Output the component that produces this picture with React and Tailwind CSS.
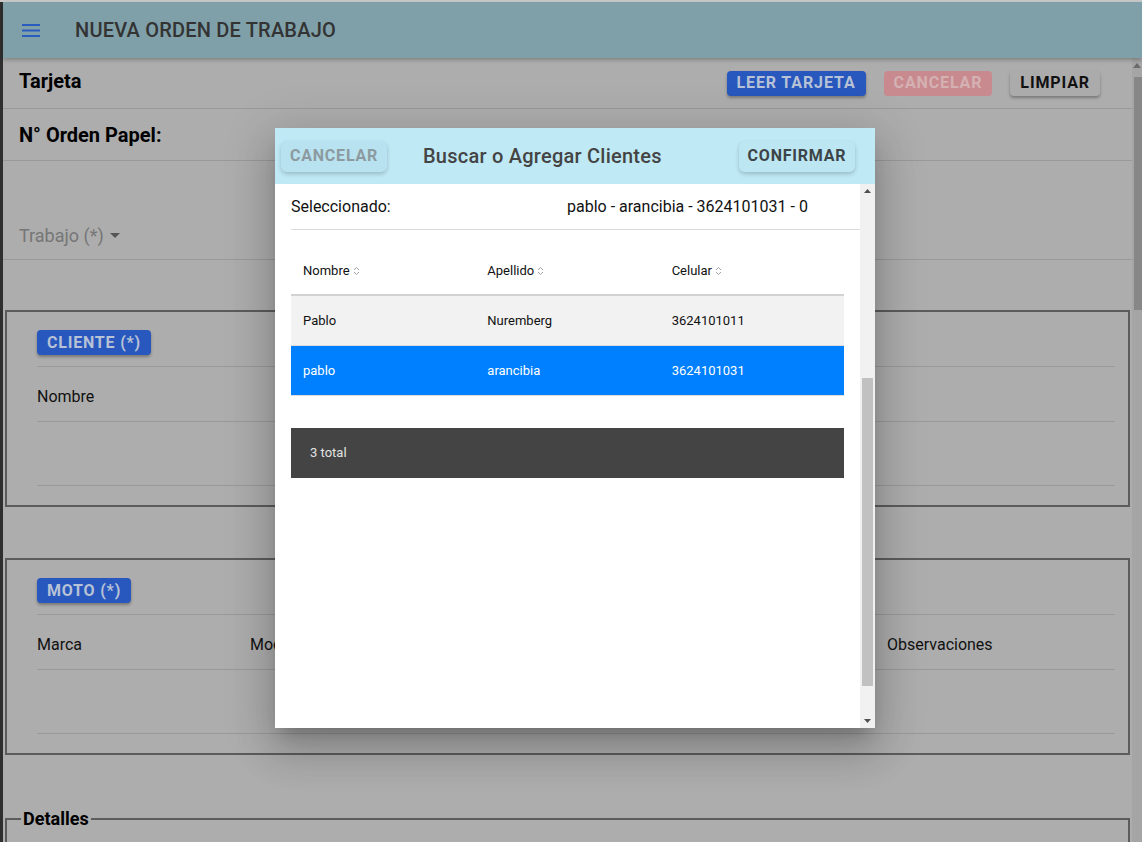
import React from 'react'

const CLIENTES = [
  { nombre: 'Pablo', apellido: 'Nuremberg', celular: '3624101011', sel: false },
  { nombre: 'pablo', apellido: 'arancibia', celular: '3624101031', sel: true },
]

function SortIcon() {
  return (
    <svg width="7" height="10" viewBox="0 0 7 10" className="ml-[3px] inline-block">
      <path d="M1 4 L3.5 1.5 L6 4" fill="none" stroke="#a0a0a0" strokeWidth="1" />
      <path d="M1 6 L3.5 8.5 L6 6" fill="none" stroke="#a0a0a0" strokeWidth="1" />
    </svg>
  )
}

function Chip({ children }) {
  return (
    <div className="h-[25px] px-[10px] rounded-[4px] bg-[#2857bd] text-[#b7c2d6] text-[16px] font-bold tracking-[0.05em] flex items-center shadow-[0_2px_3px_rgba(0,0,0,0.3)]">
      {children}
    </div>
  )
}

function FieldBox({ chip, labels }) {
  return (
    <div className="mx-[2px] border-2 border-[#5c5c5c] pl-[30px] pr-[13px] pt-[18px] pb-[19px]">
      <div className="flex">
        <Chip>{chip}</Chip>
      </div>
      <div className="mt-[11px] border-b border-[#999]" />
      <div className="h-[55px] pt-[6px] border-b border-[#999] grid grid-cols-[213px_213px_212px_212px_1fr] items-center text-[16px] text-[#111]">
        {labels.map((l, i) => (
          <span key={i}>{l}</span>
        ))}
      </div>
      <div className="h-[64px] border-b border-[#999]" />
    </div>
  )
}

export default function App() {
  return (
    <div className="relative w-[1142px] h-[842px] overflow-hidden bg-[#adadad] font-['Roboto',sans-serif] flex flex-col">
      <div className="h-[2px] bg-[#c9c9c9] shrink-0" />
      <div className="flex flex-1 min-h-0">
        {/* strip of another window */}
        <div className="w-[3px] bg-[#2f2f2f] shrink-0" />

        <div className="flex-1 flex flex-col min-w-0">
          {/* App bar */}
          <header className="h-[56px] shrink-0 bg-[#7fa0a8] flex items-center shadow-[0_2px_4px_rgba(0,0,0,0.25)] relative z-10">
            <svg width="18" height="13" viewBox="0 0 18 13" className="ml-[19px]">
              <rect x="0" y="0" width="18" height="2" fill="#2a5cbf" />
              <rect x="0" y="5.5" width="18" height="2" fill="#2a5cbf" />
              <rect x="0" y="11" width="18" height="2" fill="#2a5cbf" />
            </svg>
            <h1 className="ml-[35px] text-[20px] font-medium text-[#333] tracking-[0.01em]">NUEVA ORDEN DE TRABAJO</h1>
          </header>

          <div className="flex flex-1 min-h-0">
            {/* page content */}
            <main className="flex-1 min-w-0">
              <div className="h-[51px] pb-[4px] border-b border-[#999] flex items-center pl-[16px] pr-[32px]">
                <span className="text-[20px] font-bold text-black">Tarjeta</span>
                <div className="ml-auto flex gap-[18px] pt-[4px]">
                  <button className="h-[25px] px-[10px] rounded-[4px] bg-[#2857bd] text-[#b7c2d6] text-[16px] font-bold tracking-[0.055em] shadow-[0_2px_3px_rgba(0,0,0,0.3)]">
                    LEER TARJETA
                  </button>
                  <button className="h-[25px] px-[10px] rounded-[4px] bg-[#c98a8f] text-[#d4b1b3] text-[16px] font-bold tracking-[0.055em]">
                    CANCELAR
                  </button>
                  <button className="h-[25px] px-[10px] rounded-[4px] bg-[#ababab] text-[#111] text-[16px] font-bold tracking-[0.055em] shadow-[0_2px_3px_rgba(0,0,0,0.3)]">
                    LIMPIAR
                  </button>
                </div>
              </div>

              <div className="h-[52px] border-b border-[#999] flex items-center pl-[16px]">
                <span className="text-[20px] font-bold text-black">N° Orden Papel:</span>
              </div>

              <div className="h-[99px] border-b border-[#999] flex items-end pl-[16px] pb-[10px]">
                <span className="text-[18px] text-[#767676] flex items-center">
                  Trabajo (*)
                  <svg width="10" height="5" viewBox="0 0 10 5" className="ml-[6px]">
                    <path d="M0 0 L10 0 L5 5 Z" fill="#555" />
                  </svg>
                </span>
              </div>

              <div className="mt-[50px]">
                <FieldBox chip="CLIENTE (*)" labels={['Nombre']} />
              </div>
              <div className="mt-[51px]">
                <FieldBox chip="MOTO (*)" labels={['Marca', 'Modelo', '', '', 'Observaciones']} />
              </div>

              <fieldset className="mt-[50px] mx-[2px] border-2 border-[#5c5c5c] h-[60px]">
                <legend className="ml-[14px] px-[2px] text-[18px] font-bold text-black">Detalles</legend>
              </fieldset>
            </main>

            {/* page scrollbar */}
            <div className="w-[10px] shrink-0 bg-[#a5a5a5] flex flex-col items-end">
              <svg width="8" height="5" viewBox="0 0 8 5" className="mt-[5px] mr-[1px]">
                <path d="M0 5 L4 0 L8 5 Z" fill="#6b6b6b" />
              </svg>
              <div className="mt-[9px] w-[8px] h-[233px] bg-[#878787]" />
            </div>
          </div>
        </div>
      </div>

      {/* Modal */}
      <div className="absolute left-[275px] top-[128px] w-[600px] h-[600px] bg-white flex flex-col shadow-[0_11px_15px_-7px_rgba(0,0,0,0.2),0_24px_38px_3px_rgba(0,0,0,0.14),0_9px_46px_8px_rgba(0,0,0,0.12)]">
        <div className="h-[56px] shrink-0 bg-[#bfe9f5] flex items-center pl-[6px] pr-[20px]">
          <button className="h-[31px] w-[106px] rounded-[6px] bg-[#b8e2ef] text-[#8c9aa0] text-[16px] font-bold tracking-[0.05em] shadow-[0_2px_4px_rgba(0,0,0,0.2)]">
            CANCELAR
          </button>
          <h2 className="ml-[36px] text-[20px] font-medium text-[#444] tracking-[0.012em]">Buscar o Agregar Clientes</h2>
          <button className="ml-auto h-[31px] w-[116px] rounded-[6px] bg-[#bde6f3] text-[#3c4447] text-[16px] font-bold tracking-[0.05em] shadow-[0_2px_4px_rgba(0,0,0,0.2)]">
            CONFIRMAR
          </button>
        </div>

        <div className="flex flex-1 min-h-0">
          <div className="flex-1 min-w-0 pl-[16px]">
            <div className="h-[46px] border-b border-[#dcdcdc] flex items-center text-[16px] text-[#111]">
              <span className="w-[276px]">Seleccionado:</span>
              <span>pablo - arancibia - 3624101031 - 0</span>
            </div>

            <div className="mt-[16px] mr-[16px]">
              <div className="h-[50px] pt-[1px] grid grid-cols-3 items-center border-b-2 border-[#d2d2d2] text-[13px] text-[#111]">
                <span className="px-[12px] flex items-center">Nombre<SortIcon /></span>
                <span className="px-[12px] flex items-center">Apellido<SortIcon /></span>
                <span className="px-[12px] flex items-center">Celular<SortIcon /></span>
              </div>
              {CLIENTES.map((c) => (
                <div
                  key={c.celular}
                  className={`h-[50px] grid grid-cols-3 items-center border-b border-[#dcdcdc] text-[13px] ${c.sel ? 'bg-[#0080ff] text-white' : 'bg-[#f2f2f2] text-[#111]'}`}
                >
                  <span className="px-[12px]">{c.nombre}</span>
                  <span className="px-[12px]">{c.apellido}</span>
                  <span className="px-[12px]">{c.celular}</span>
                </div>
              ))}

              <div className="mt-[32px] h-[50px] bg-[#444] flex items-center pl-[19px] text-[13px] text-[#e2e2e2]">
                3 total
              </div>
            </div>
          </div>

          {/* modal scrollbar */}
          <div className="w-[15px] shrink-0 bg-[#f1f1f1] flex flex-col items-center">
            <svg width="7" height="4" viewBox="0 0 7 4" className="mt-[5px]">
              <path d="M0 4 L3.5 0 L7 4 Z" fill="#505050" />
            </svg>
            <div className="mt-[185px] w-[11px] h-[308px] bg-[#c1c1c1]" />
            <svg width="7" height="4" viewBox="0 0 7 4" className="mt-auto mb-[5px]">
              <path d="M0 0 L7 0 L3.5 4 Z" fill="#505050" />
            </svg>
          </div>
        </div>
      </div>
    </div>
  )
}
